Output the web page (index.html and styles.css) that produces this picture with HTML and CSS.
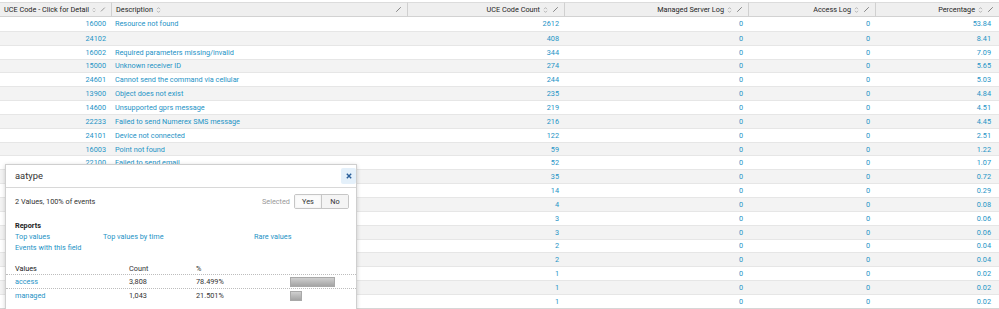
FILE: index.html
```html
<!DOCTYPE html>
<html lang="en">
<head>
<meta charset="utf-8">
<title>UCE Code results</title>
<link rel="stylesheet" href="styles.css">
</head>
<body>
<div class="page">
  <table class="results">
    <colgroup>
      <col class="c-code"><col class="c-desc"><col class="c-count"><col class="c-managed"><col class="c-access"><col class="c-pct">
    </colgroup>
    <thead>
      <tr>
        <th class="num"><div class="th-in"><span class="lbl">UCE Code - Click for Detail</span><svg class="sort" viewBox="0 0 5 8"><path d="M1 3.2 L2.5 1.6 L4 3.2 M1 4.8 L2.5 6.4 L4 4.8"/></svg><svg class="edit" viewBox="0 0 7 7"><path d="M1.2 5.8 L5.8 1.2"/></svg></div></th>
        <th class="txt"><div class="th-in"><span class="lbl">Description</span><svg class="sort" viewBox="0 0 5 8"><path d="M1 3.2 L2.5 1.6 L4 3.2 M1 4.8 L2.5 6.4 L4 4.8"/></svg><svg class="edit push" viewBox="0 0 7 7"><path d="M1.2 5.8 L5.8 1.2"/></svg></div></th>
        <th class="num"><div class="th-in"><span class="lbl">UCE Code Count</span><svg class="sort" viewBox="0 0 5 8"><path d="M1 3.2 L2.5 1.6 L4 3.2 M1 4.8 L2.5 6.4 L4 4.8"/></svg><svg class="edit" viewBox="0 0 7 7"><path d="M1.2 5.8 L5.8 1.2"/></svg></div></th>
        <th class="num"><div class="th-in"><span class="lbl">Managed Server Log</span><svg class="sort" viewBox="0 0 5 8"><path d="M1 3.2 L2.5 1.6 L4 3.2 M1 4.8 L2.5 6.4 L4 4.8"/></svg><svg class="edit" viewBox="0 0 7 7"><path d="M1.2 5.8 L5.8 1.2"/></svg></div></th>
        <th class="num"><div class="th-in"><span class="lbl">Access Log</span><svg class="sort" viewBox="0 0 5 8"><path d="M1 3.2 L2.5 1.6 L4 3.2 M1 4.8 L2.5 6.4 L4 4.8"/></svg><svg class="edit" viewBox="0 0 7 7"><path d="M1.2 5.8 L5.8 1.2"/></svg></div></th>
        <th class="num last"><div class="th-in"><span class="lbl">Percentage</span><svg class="sort" viewBox="0 0 5 8"><path d="M1 3.2 L2.5 1.6 L4 3.2 M1 4.8 L2.5 6.4 L4 4.8"/></svg><svg class="edit" viewBox="0 0 7 7"><path d="M1.2 5.8 L5.8 1.2"/></svg></div></th>
      </tr>
    </thead>
    <tbody>
      <tr><td class="num">16000</td><td class="txt">Resource not found</td><td class="num">2612</td><td class="num">0</td><td class="num">0</td><td class="num last">53.84</td></tr>
      <tr><td class="num">24102</td><td class="txt"></td><td class="num">408</td><td class="num">0</td><td class="num">0</td><td class="num last">8.41</td></tr>
      <tr><td class="num">16002</td><td class="txt">Required parameters missing/invalid</td><td class="num">344</td><td class="num">0</td><td class="num">0</td><td class="num last">7.09</td></tr>
      <tr><td class="num">15000</td><td class="txt">Unknown receiver ID</td><td class="num">274</td><td class="num">0</td><td class="num">0</td><td class="num last">5.65</td></tr>
      <tr><td class="num">24601</td><td class="txt">Cannot send the command via cellular</td><td class="num">244</td><td class="num">0</td><td class="num">0</td><td class="num last">5.03</td></tr>
      <tr><td class="num">13900</td><td class="txt">Object does not exist</td><td class="num">235</td><td class="num">0</td><td class="num">0</td><td class="num last">4.84</td></tr>
      <tr><td class="num">14600</td><td class="txt">Unsupported gprs message</td><td class="num">219</td><td class="num">0</td><td class="num">0</td><td class="num last">4.51</td></tr>
      <tr><td class="num">22233</td><td class="txt">Failed to send Numerex SMS message</td><td class="num">216</td><td class="num">0</td><td class="num">0</td><td class="num last">4.45</td></tr>
      <tr><td class="num">24101</td><td class="txt">Device not connected</td><td class="num">122</td><td class="num">0</td><td class="num">0</td><td class="num last">2.51</td></tr>
      <tr><td class="num">16003</td><td class="txt">Point not found</td><td class="num">59</td><td class="num">0</td><td class="num">0</td><td class="num last">1.22</td></tr>
      <tr><td class="num">22100</td><td class="txt">Failed to send email</td><td class="num">52</td><td class="num">0</td><td class="num">0</td><td class="num last">1.07</td></tr>
      <tr><td class="num"></td><td class="txt"></td><td class="num">35</td><td class="num">0</td><td class="num">0</td><td class="num last">0.72</td></tr>
      <tr><td class="num"></td><td class="txt"></td><td class="num">14</td><td class="num">0</td><td class="num">0</td><td class="num last">0.29</td></tr>
      <tr><td class="num"></td><td class="txt"></td><td class="num">4</td><td class="num">0</td><td class="num">0</td><td class="num last">0.08</td></tr>
      <tr><td class="num"></td><td class="txt"></td><td class="num">3</td><td class="num">0</td><td class="num">0</td><td class="num last">0.06</td></tr>
      <tr><td class="num"></td><td class="txt"></td><td class="num">3</td><td class="num">0</td><td class="num">0</td><td class="num last">0.06</td></tr>
      <tr><td class="num"></td><td class="txt"></td><td class="num">2</td><td class="num">0</td><td class="num">0</td><td class="num last">0.04</td></tr>
      <tr><td class="num"></td><td class="txt"></td><td class="num">2</td><td class="num">0</td><td class="num">0</td><td class="num last">0.04</td></tr>
      <tr><td class="num"></td><td class="txt"></td><td class="num">1</td><td class="num">0</td><td class="num">0</td><td class="num last">0.02</td></tr>
      <tr><td class="num"></td><td class="txt"></td><td class="num">1</td><td class="num">0</td><td class="num">0</td><td class="num last">0.02</td></tr>
      <tr><td class="num"></td><td class="txt"></td><td class="num">1</td><td class="num">0</td><td class="num">0</td><td class="num last">0.02</td></tr>
    </tbody>
  </table>

  <div class="field-popup">
    <div class="fp-head">
      <span class="fp-title">aatype</span>
      <button class="fp-close" type="button"><svg viewBox="0 0 6 6"><path d="M0.8 0.8 L5.2 5.2 M5.2 0.8 L0.8 5.2"/></svg></button>
    </div>
    <div class="fp-body">
      <div class="fp-summary">
        <span>2 Values, 100% of events</span>
        <span class="fp-selected">Selected</span>
        <div class="seg"><span class="seg-btn on">Yes</span><span class="seg-btn">No</span></div>
      </div>
      <div class="fp-reports">
        <div class="fp-h">Reports</div>
        <div class="fp-links">
          <a class="l1">Top values</a><a class="l2">Top values by time</a><a class="l3">Rare values</a>
        </div>
        <div class="fp-links"><a>Events with this field</a></div>
      </div>
    </div>
    <div class="fp-values">
      <div class="fv-row fv-head"><span class="fv-name">Values</span><span class="fv-count">Count</span><span class="fv-pct">%</span><span class="fv-bar"></span></div>
      <div class="fv-row"><a class="fv-name">access</a><span class="fv-count">3,808</span><span class="fv-pct">78.499%</span><span class="fv-bar"><span class="bar" style="width:45px"></span></span></div>
      <div class="fv-row"><a class="fv-name">managed</a><span class="fv-count">1,043</span><span class="fv-pct">21.501%</span><span class="fv-bar"><span class="bar" style="width:12px"></span></span></div>
    </div>
  </div>
</div>
</body>
</html>
```

FILE: styles.css
```css
html, body {
  margin: 0;
  padding: 0;
  background: #fff;
  overflow: hidden;
}
body {
  font-family: Roboto, "Liberation Sans", sans-serif;
  font-size: 7.3px;
  color: #333;
}
.page {
  position: relative;
  padding-top: 2px;
  height: 307px;
}
.results {
  width: 999px;
  table-layout: fixed;
  border-collapse: separate;
  border-spacing: 0;
  border-bottom: 1px solid #d6d6d6;
}
.c-code { width: 111px; }
.c-desc { width: 296px; }
.c-count { width: 157px; }
.c-managed { width: 184px; }
.c-access { width: 127px; }
.c-pct { width: 124px; }

.results th {
  box-sizing: border-box;
  height: 15px;
  padding: 0 5px 0 4px;
  background: #efefef;
  border-top: 1px solid #dcdcdc;
  border-bottom: 1px solid #d2d2d2;
  font-weight: normal;
  color: #262626;
  vertical-align: middle;
}
.results th + th { border-left: 1px solid #d0d0d0; }
.th-in {
  display: flex;
  align-items: center;
  justify-content: flex-end;
  height: 13px;
  white-space: nowrap;
}
.results th.txt .th-in { justify-content: flex-start; }
.results th.txt { padding-left: 4px; }
.sort {
  width: 5px;
  height: 8px;
  margin-left: 3px;
  fill: none;
  stroke: #a8a8a8;
  stroke-width: 0.8;
}
.edit {
  width: 7px;
  height: 7px;
  margin-left: 4px;
  fill: none;
  stroke: #7a7a7a;
  stroke-width: 0.9;
}
.edit.push { margin-left: auto; }

.results td {
  box-sizing: border-box;
  height: 13.857px;
  padding: 0 5px;
  border-top: 1px solid #e6e6e6;
  color: #1e93c6;
  white-space: nowrap;
  overflow: hidden;
  vertical-align: middle;
  line-height: 11px;
}
.results tbody tr:first-child td { border-top: none; }
.results tbody tr:nth-child(even) td { background: #f3f3f3; }
.results td.num { text-align: right; }
.results td.txt { text-align: left; padding-left: 4px; }
.results td.last { padding-right: 8px; }

/* field summary popup */
.field-popup {
  position: absolute;
  left: 5px;
  top: 164px;
  width: 352px;
  height: 145px;
  overflow: hidden;
  background: #fff;
  border: 1px solid #cfcfcf;
  border-bottom: none;
  box-shadow: 0 1px 4px rgba(0, 0, 0, 0.18);
  box-sizing: border-box;
}
.fp-head {
  display: flex;
  align-items: flex-start;
  justify-content: space-between;
  height: 22px;
  border-bottom: 1px solid #d8d8d8;
  padding-left: 9px;
}
.fp-title {
  font-size: 9.4px;
  line-height: 10px;
  margin-top: 6px;
  color: #333;
}
.fp-close {
  width: 15px;
  height: 16px;
  margin: 3px 0 0 0;
  padding: 0;
  border: none;
  border-radius: 2px;
  background: #e4f0fa;
  display: flex;
  align-items: center;
  justify-content: center;
}
.fp-close svg {
  width: 6px;
  height: 6px;
  fill: none;
  stroke: #2a5f9a;
  stroke-width: 1.4;
}
.fp-body { padding: 0 7px 0 9px; }
.fp-summary {
  display: flex;
  align-items: center;
  height: 15px;
  margin-top: 6px;
}
.fp-selected {
  margin-left: auto;
  margin-right: 4px;
  color: #9a9a9a;
}
.seg {
  display: flex;
  height: 15px;
  border: 1px solid #c6c6c6;
  border-radius: 2px;
  box-sizing: border-box;
  overflow: hidden;
}
.seg-btn {
  display: flex;
  align-items: center;
  justify-content: center;
  width: 26px;
  background: #f4f4f4;
  color: #333;
}
.seg-btn.on {
  background: #fbfbfb;
  border-right: 1px solid #c6c6c6;
  box-shadow: inset 0 0 2px rgba(0, 0, 0, 0.08);
}
.fp-reports { margin-top: 11px; }
.fp-h {
  font-weight: bold;
  line-height: 11px;
  color: #222;
}
.fp-links {
  display: flex;
  line-height: 11px;
}
.fp-links a { color: #1e93c6; }
.fp-links .l1 { width: 88px; }
.fp-links .l2 { width: 151px; }

.fp-values { margin-top: 9px; }
.fv-row {
  display: flex;
  align-items: center;
  height: 13px;
  border-bottom: 1px dotted #bdbdbd;
}
.fv-row:last-child { border-bottom: none; }
.fv-head { height: 12px; color: #222; }
.fv-name { width: 114px; padding-left: 9px; color: #1e93c6; }
.fv-head .fv-name { color: #222; }
.fv-count { width: 67px; color: #333; }
.fv-pct { width: 94px; color: #333; }
.fv-bar { display: flex; align-items: center; }
.bar {
  display: block;
  height: 10px;
  box-sizing: border-box;
  border: 1px solid #a9a9a9;
  background: linear-gradient(#cfcfcf, #a4a4a4);
}
```
